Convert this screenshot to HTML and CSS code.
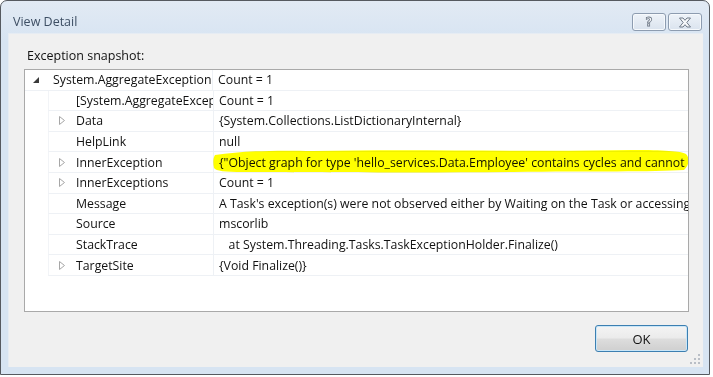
FILE: index.html
```html
<!DOCTYPE html>
<html lang="en">
<head>
  <meta charset="UTF-8">
  <title>View Detail</title>
  <link rel="stylesheet" href="styles.css">
</head>
<body>
  <div class="window">
    <div class="titlebar">
      <span class="caption">View Detail</span>
      <div class="caption-buttons">
        <div class="cap-btn help">?</div>
        <div class="cap-btn close">
          <svg width="14" height="11" viewBox="0 0 14 11">
            <path d="M1.5 1 L5 1 L7 3.3 L9 1 L12.5 1 L8.8 5.5 L12.5 10 L9 10 L7 7.7 L5 10 L1.5 10 L5.2 5.5 Z" fill="#f7f9fb" stroke="#6f7a88" stroke-width="1" stroke-linejoin="round"/>
          </svg>
        </div>
      </div>
    </div>

    <div class="client">
      <div class="label">Exception snapshot:</div>

      <div class="tree">
        <div class="row root">
          <div class="name"><span class="exp"><svg width="6" height="6" viewBox="0 0 6 6"><path d="M6 0 L6 6 L0 6 Z" fill="#3a3a3a"/></svg></span>System.AggregateException</div>
          <div class="value">Count = 1</div>
        </div>
        <div class="row child">
          <div class="name"><span class="exp"></span><span class="clip">[System.AggregateException]</span></div>
          <div class="value">Count = 1</div>
        </div>
        <div class="row child">
          <div class="name"><span class="exp"><svg width="6" height="9" viewBox="0 0 6 9"><path d="M0.5 0.5 L5.5 4.5 L0.5 8.5 Z" fill="none" stroke="#a6a6a6"/></svg></span>Data</div>
          <div class="value">{System.Collections.ListDictionaryInternal}</div>
        </div>
        <div class="row child">
          <div class="name"><span class="exp"></span>HelpLink</div>
          <div class="value">null</div>
        </div>
        <div class="row child">
          <div class="name"><span class="exp"><svg width="6" height="9" viewBox="0 0 6 9"><path d="M0.5 0.5 L5.5 4.5 L0.5 8.5 Z" fill="none" stroke="#a6a6a6"/></svg></span>InnerException</div>
          <div class="value">{"Object graph for type 'hello_services.Data.Employee' contains cycles and cannot be serialized if reference tracking is disabled."}</div>
        </div>
        <div class="row child">
          <div class="name"><span class="exp"><svg width="6" height="9" viewBox="0 0 6 9"><path d="M0.5 0.5 L5.5 4.5 L0.5 8.5 Z" fill="none" stroke="#a6a6a6"/></svg></span>InnerExceptions</div>
          <div class="value">Count = 1</div>
        </div>
        <div class="row child">
          <div class="name"><span class="exp"></span>Message</div>
          <div class="value">A Task's exception(s) were not observed either by Waiting on the Task or accessing its Exception property.</div>
        </div>
        <div class="row child">
          <div class="name"><span class="exp"></span>Source</div>
          <div class="value">mscorlib</div>
        </div>
        <div class="row child">
          <div class="name"><span class="exp"></span>StackTrace</div>
          <div class="value">   at System.Threading.Tasks.TaskExceptionHolder.Finalize()</div>
        </div>
        <div class="row child">
          <div class="name"><span class="exp"><svg width="6" height="9" viewBox="0 0 6 9"><path d="M0.5 0.5 L5.5 4.5 L0.5 8.5 Z" fill="none" stroke="#a6a6a6"/></svg></span>TargetSite</div>
          <div class="value">{Void Finalize()}</div>
        </div>

        <!-- highlighter stroke over the InnerException value -->
        <svg class="marker" width="480" height="26" viewBox="0 0 480 26">
          <path d="M2 7 C30 3 60 2 100 3 C200 1 320 4 420 2 C450 2 468 3 473 6 C477 10 476 18 471 22 C440 24 380 23 300 24 C200 25 90 24 30 24 C12 24 3 23 1 20 C0 15 0 10 2 7 Z" fill="#ffff00"/>
        </svg>
      </div>

      <div class="footer">
        <div class="ok">OK</div>
      </div>

      <svg class="grip" width="10" height="10" viewBox="0 0 10 10">
        <g fill="#b9bec6">
          <rect x="8" y="0" width="2" height="2"/>
          <rect x="4" y="4" width="2" height="2"/>
          <rect x="8" y="4" width="2" height="2"/>
          <rect x="0" y="8" width="2" height="2"/>
          <rect x="4" y="8" width="2" height="2"/>
          <rect x="8" y="8" width="2" height="2"/>
        </g>
      </svg>
    </div>
  </div>
</body>
</html>
```

FILE: styles.css
```css
body {
  margin: 0;
  background-color: #ffffff;
  font-family: "Open Sans", "Noto Sans", sans-serif;
  font-size: 12.3px;
  color: #111111;
}
.window {
  box-sizing: border-box;
  width: 710px;
  height: 375px;
  border: 1px solid #565a60;
  border-radius: 7px 7px 0 0;
  background: linear-gradient(#e2eaf4, #d7e4f2 40px);
  display: flex;
  flex-direction: column;
}
.titlebar {
  height: 32px;
  display: flex;
  justify-content: space-between;
  align-items: flex-start;
  padding: 0 7px 0 12px;
}
.caption {
  margin-top: 12px;
  font-size: 12.5px;
  color: #3e4f64;
}
.caption-buttons {
  display: flex;
  gap: 2px;
  margin-top: 12px;
}
.cap-btn {
  box-sizing: border-box;
  width: 34px;
  height: 18px;
  border: 1px solid #8d9cb0;
  border-radius: 3px;
  background: linear-gradient(#eef3f9, #dae3ee);
  box-shadow: inset 0 0 0 1px #f6f9fc;
  display: flex;
  align-items: center;
  justify-content: center;
}
.help {
  font-family: "DejaVu Sans", sans-serif;
  font-weight: bold;
  font-size: 12px;
  color: #f7f9fb;
  -webkit-text-stroke: 0.8px #6f7a88;
  line-height: 1;
}
.client {
  position: relative;
  flex: 1;
  margin: 0 6px 7px 7px;
  background-color: #f0f0f0;
  border: 1px solid #e6ecf3;
  border-width: 1px 0 0 1px;
  display: flex;
  flex-direction: column;
}
.label {
  margin: 13px 0 0 18px;
  line-height: 17px;
  font-size: 12.5px;
}
.tree {
  position: relative;
  box-sizing: border-box;
  width: 665px;
  height: 243px;
  margin: 5px 0 0 15px;
  border: 1px solid #a9a9a9;
  background-color: #ffffff;
  overflow: hidden;
}
.row {
  box-sizing: border-box;
  height: 20.6px;
  display: flex;
  align-items: center;
  border-bottom: 1px solid #eef1f5;
  white-space: nowrap;
}
.row.child {
  margin-left: 23px;
  border-left: 1px solid #f2f4f7;
}
.name {
  box-sizing: border-box;
  width: 188px;
  height: 100%;
  display: flex;
  align-items: center;
  padding-left: 6px;
  border-right: 1px solid #eef1f5;
  overflow: hidden;
}
.row.child .name {
  width: 165px;
  padding-left: 8px;
}
.clip {
  overflow: hidden;
  min-width: 0;
}
.exp {
  flex: none;
  width: 22px;
  display: flex;
  align-items: center;
  padding-left: 2px;
  box-sizing: border-box;
}
.row.child .exp {
  width: 19px;
}
.value {
  flex: 1;
  min-width: 0;
  padding-left: 5px;
  white-space: pre;
  overflow: hidden;
}
.marker {
  position: absolute;
  left: 188px;
  top: 78px;
  mix-blend-mode: multiply;
  pointer-events: none;
}
.footer {
  display: flex;
  justify-content: flex-end;
  padding: 13px 15px 0 0;
}
.ok {
  box-sizing: border-box;
  width: 93px;
  height: 27px;
  border: 1px solid #3c7fb1;
  border-radius: 3px;
  background: linear-gradient(#f4f4f4 0%, #ebebeb 48%, #dddddd 52%, #cfcfcf 100%);
  box-shadow: inset 0 0 0 1px #c9e6f8;
  display: flex;
  align-items: center;
  justify-content: center;
  font-size: 13px;
}
.grip {
  position: absolute;
  right: 3px;
  bottom: 3px;
}
```
